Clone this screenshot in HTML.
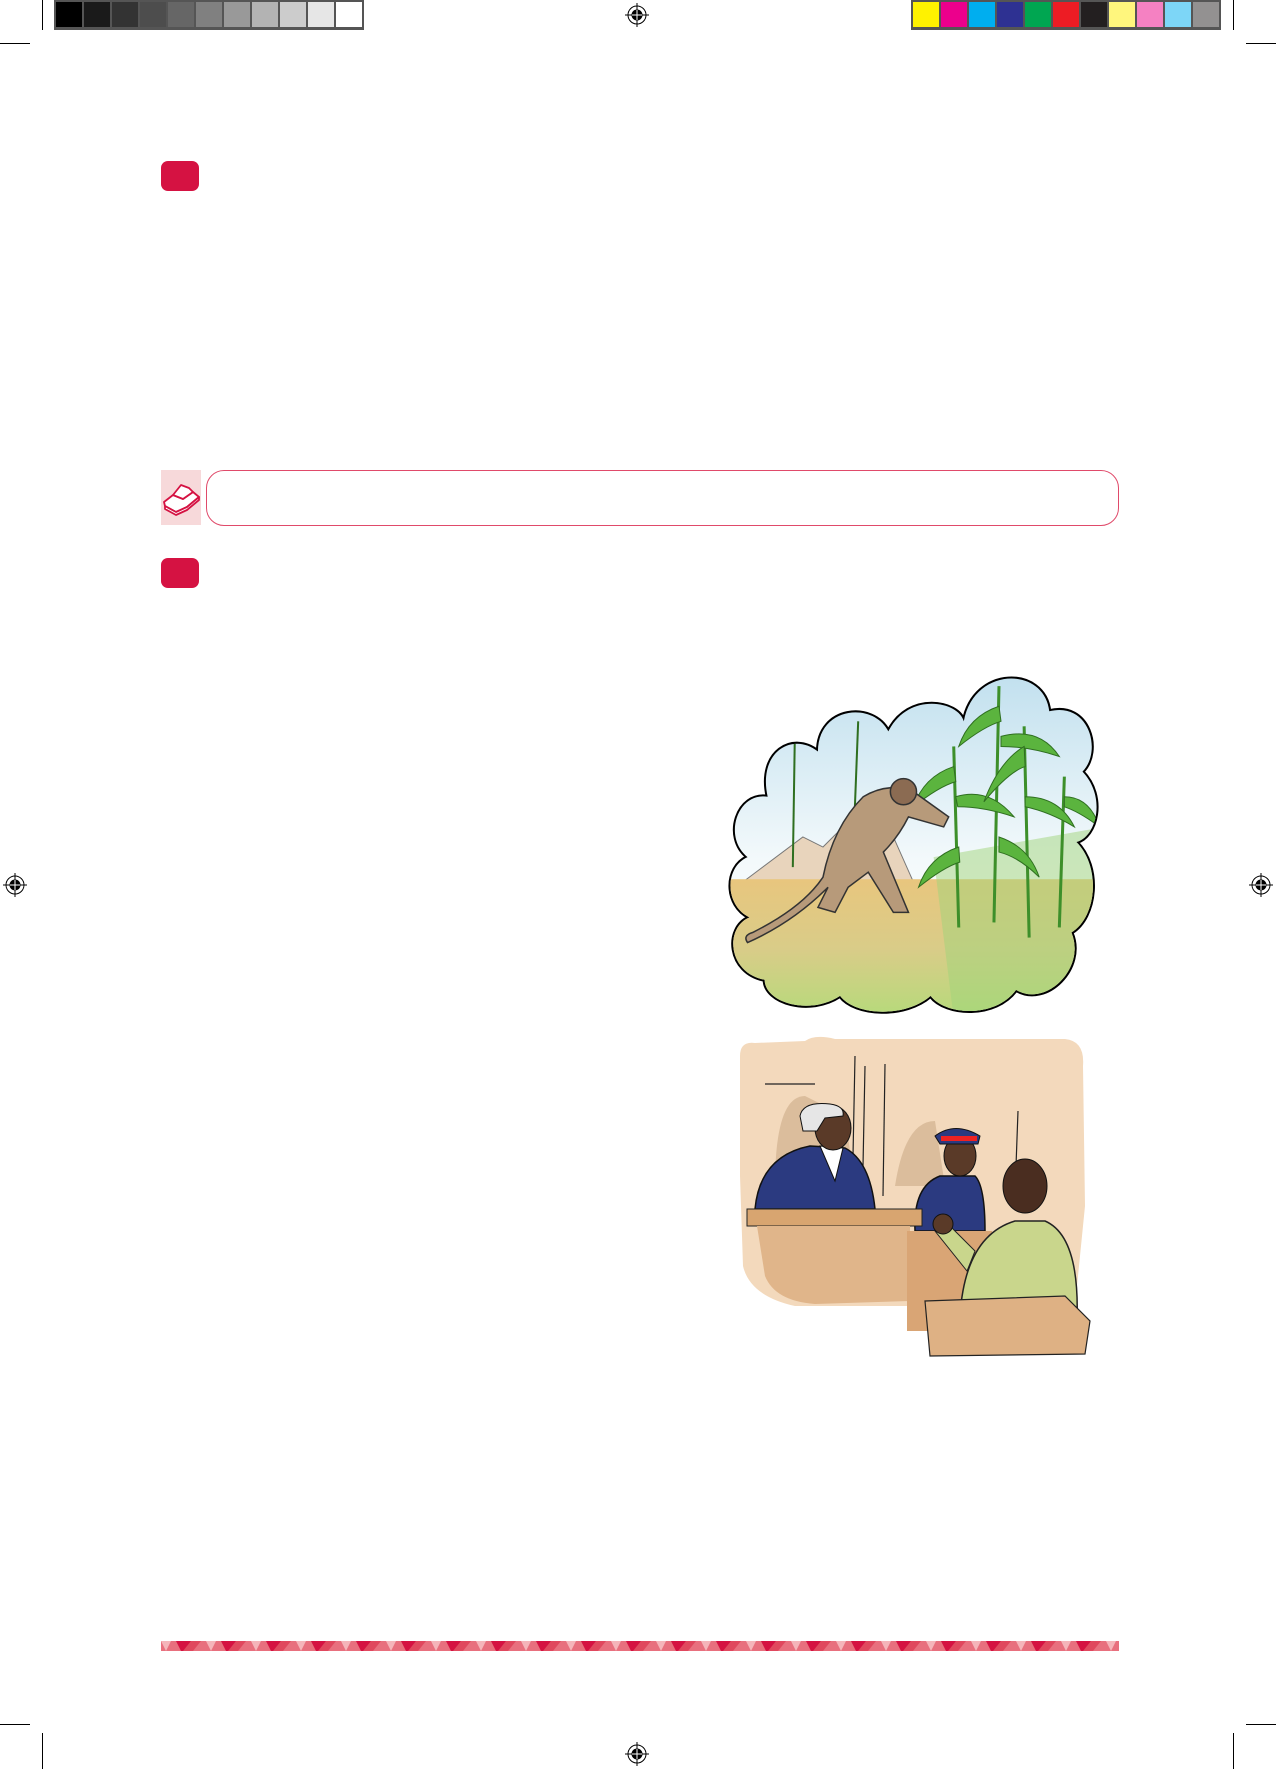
<!DOCTYPE html>
<html><head><meta charset="utf-8"><style>
html,body{margin:0;padding:0;background:#fff}
body{width:1276px;height:1769px;position:relative;overflow:hidden;font-family:"Liberation Sans",sans-serif}
.a{position:absolute}
.bar{position:absolute;top:0;height:30px;background:#555;display:flex;gap:2px;padding:2px 2px 3px 2px;box-sizing:border-box}
.bar div{flex:1}
.sq{position:absolute;width:38px;height:30px;background:#d51242;border-radius:7px}
</style></head><body>

<div class="bar" style="left:54px;width:310px">
<div style="background:#000"></div><div style="background:#1a1a1a"></div><div style="background:#333"></div><div style="background:#4d4d4d"></div><div style="background:#666"></div><div style="background:#808080"></div><div style="background:#999"></div><div style="background:#b3b3b3"></div><div style="background:#ccc"></div><div style="background:#e6e6e6"></div><div style="background:#fff"></div>
</div>
<div class="bar" style="left:911px;width:310px">
<div style="background:#fff200"></div><div style="background:#ec008c"></div><div style="background:#00aeef"></div><div style="background:#2e3192"></div><div style="background:#00a651"></div><div style="background:#ed1c24"></div><div style="background:#231f20"></div><div style="background:#fff67d"></div><div style="background:#f581c2"></div><div style="background:#7dd6f7"></div><div style="background:#939191"></div>
</div>

<div class="a" style="left:42px;top:0;width:1px;height:30px;background:#000"></div>
<div class="a" style="left:0;top:43px;width:30px;height:1px;background:#000"></div>
<div class="a" style="left:1233px;top:0;width:1px;height:30px;background:#000"></div>
<div class="a" style="left:1246px;top:43px;width:30px;height:1px;background:#000"></div>
<div class="a" style="left:42px;top:1733px;width:1px;height:36px;background:#000"></div>
<div class="a" style="left:0;top:1724px;width:30px;height:1px;background:#000"></div>
<div class="a" style="left:1233px;top:1733px;width:1px;height:36px;background:#000"></div>
<div class="a" style="left:1246px;top:1724px;width:30px;height:1px;background:#000"></div>

<svg class="a" style="left:0;top:0" width="1276" height="1769">
<defs><g id="reg"><circle r="9" fill="none" stroke="#000" stroke-width="1"/><circle r="5.5" fill="#000"/><line x1="-12" y1="0" x2="12" y2="0" stroke="#000"/><line x1="0" y1="-12" x2="0" y2="12" stroke="#000"/><line x1="-5" y1="0" x2="5" y2="0" stroke="#fff" stroke-width="1"/><line x1="0" y1="-5" x2="0" y2="5" stroke="#fff" stroke-width="1"/></g></defs>
<use href="#reg" x="637" y="15"/>
<use href="#reg" x="637" y="1754"/>
<use href="#reg" x="15" y="885"/>
<use href="#reg" x="1261" y="885"/>
</svg>

<div class="sq" style="left:161px;top:161px"></div>
<div class="sq" style="left:161px;top:558px"></div>

<div class="a" style="left:161px;top:470px;width:40px;height:55px;background:#f7d9da"></div>
<svg class="a" style="left:161px;top:470px" width="40" height="55" viewBox="0 0 40 55">
<g fill="#fff" stroke="#d51242" stroke-width="1.8" stroke-linejoin="round">
<path d="M3 32 L12 25 L22 29 L32 22 L38 27 L26 37 L15 42 L4 36 Z"/>
<path d="M12 25 L20 15 L28 18 L32 22 L22 29 Z"/>
<path d="M4 36 L15 42 L26 37 L38 27 L38 30 L26 40 L15 45 L4 39 Z"/>
</g></svg>
<div class="a" style="left:206px;top:470px;width:913px;height:56px;box-sizing:border-box;border:1.5px solid #e04a6a;border-radius:18px"></div>

<svg class="a" style="left:721px;top:666px" width="385" height="352" viewBox="0 0 380 350">
<defs>
<linearGradient id="sky" x1="0" y1="0" x2="0" y2="1"><stop offset="0" stop-color="#bfdfee"/><stop offset="0.55" stop-color="#f3f9fb"/><stop offset="1" stop-color="#fff"/></linearGradient>
<linearGradient id="gr" x1="0" y1="0" x2="0" y2="1"><stop offset="0" stop-color="#e8c67e"/><stop offset="0.5" stop-color="#d9cc88"/><stop offset="1" stop-color="#b4db7a"/></linearGradient>
<clipPath id="cl"><path id="cp" d="M25 190 C0 170 15 125 45 130 C35 85 70 65 95 85 C95 40 150 35 165 65 C185 25 235 35 240 55 C250 0 320 0 325 45 C365 35 378 85 358 105 C382 130 372 170 352 175 C377 200 372 250 347 265 C362 300 322 340 292 322 C272 350 222 348 207 328 C182 350 132 348 117 328 C87 348 42 335 42 312 C5 305 2 260 27 250 C2 238 2 200 25 190 Z"/></clipPath>
</defs>
<use href="#cp" fill="#fff" stroke="#000" stroke-width="4"/>
<g clip-path="url(#cl)">
<rect x="0" y="0" width="380" height="350" fill="url(#sky)"/>
<path d="M20 215 L80 170 L100 180 L125 155 L170 170 L190 215 Z" fill="#e8d4bc" stroke="#777" stroke-width="1"/>
<rect x="0" y="212" width="380" height="140" fill="url(#gr)"/>
<path d="M210 190 L380 160 L380 350 L230 350 Z" fill="#9fd47a" opacity="0.5"/>
<g stroke="#3d8f2a" stroke-width="3" fill="none">
<path d="M235 260 L230 80"/><path d="M270 255 L275 20"/><path d="M305 270 L300 60"/><path d="M335 260 L340 110"/>
</g>
<g fill="#5bb43e" stroke="#2f6f20" stroke-width="1">
<path d="M230 100 Q200 110 190 140 Q215 120 232 115Z"/><path d="M232 130 Q265 120 290 150 Q260 140 234 140Z"/>
<path d="M275 40 Q245 50 235 80 Q260 60 277 55Z"/><path d="M277 70 Q315 60 335 90 Q305 80 277 80Z"/>
<path d="M300 80 Q275 95 260 135 Q285 105 301 100Z"/><path d="M301 130 Q335 130 350 160 Q325 145 301 140Z"/>
<path d="M235 180 Q205 190 195 220 Q220 200 236 195Z"/><path d="M275 170 Q305 180 315 210 Q295 190 275 185Z"/>
<path d="M340 130 Q365 130 375 160 Q355 145 340 140Z"/>
</g>
<g stroke="#2f6f20" stroke-width="2"><path d="M70 200 L72 70"/><path d="M130 185 L135 55"/></g>
<path d="M30 265 Q80 240 100 210 Q110 160 140 130 Q165 115 190 125 L225 150 L220 160 L185 150 Q175 170 160 185 L185 245 L170 245 L145 205 L125 220 L112 245 L95 240 L105 220 Q70 255 25 275 Q20 268 30 265 Z" fill="#b79a7a" stroke="#333" stroke-width="1.5"/>
<circle cx="180" cy="125" r="13" fill="#8b6b52" stroke="#333" stroke-width="1.5"/>
</g>
</svg>

<svg class="a" style="left:735px;top:1036px" width="356" height="322" viewBox="0 0 356 322">
<path d="M5 20 Q5 5 20 7 L70 5 Q80 -2 100 3 L330 3 Q350 5 348 30 L350 170 L340 270 L60 270 Q15 260 8 230 L5 140 Z" fill="#f3d9bc"/>
<path d="M40 150 Q40 60 70 60 L110 80 L120 150 Z" fill="#dbbd9c"/>
<path d="M160 150 Q170 85 200 85 L210 150 Z" fill="#dbbd9c"/>
<g stroke="#222" stroke-width="1.2"><line x1="120" y1="20" x2="118" y2="120"/><line x1="130" y1="30" x2="128" y2="130"/><line x1="150" y1="28" x2="148" y2="160"/><line x1="283" y1="75" x2="281" y2="130"/><line x1="30" y1="48" x2="80" y2="48"/></g>
<path d="M20 173 Q25 120 75 110 L110 112 Q135 125 140 173 Z" fill="#2b3a80" stroke="#111" stroke-width="1.5"/>
<path d="M85 110 L100 145 L108 112 Z" fill="#fff" stroke="#111"/>
<ellipse cx="98" cy="92" rx="18" ry="22" fill="#5a3a28" stroke="#111"/>
<path d="M65 80 Q68 65 95 68 Q110 70 108 80 L90 82 L82 95 L68 95 Z" fill="#e6e6e6" stroke="#111"/>
<path d="M180 195 Q178 150 205 140 L240 140 Q250 150 250 195 Z" fill="#2b3a80" stroke="#111" stroke-width="1.5"/>
<ellipse cx="225" cy="120" rx="16" ry="20" fill="#5a3a28" stroke="#111"/>
<path d="M200 100 Q220 85 245 100 L243 108 L205 108 Z" fill="#2b3a80" stroke="#111"/>
<rect x="206" y="100" width="36" height="5" fill="#e22"/>
<rect x="12" y="173" width="175" height="17" fill="#d8a570" stroke="#222"/>
<path d="M22 190 L175 190 L175 265 L80 268 Q40 265 30 240 Z" fill="#e0b58a"/>
<rect x="172" y="195" width="85" height="100" fill="#d9a575"/>
<path d="M225 280 Q230 200 280 185 L310 185 Q345 200 342 285 Z" fill="#c9d68c" stroke="#222" stroke-width="1.5"/>
<path d="M240 215 L210 185 L200 195 L232 235 Z" fill="#c9d68c" stroke="#222"/>
<circle cx="208" cy="188" r="10" fill="#5a3a28" stroke="#111"/>
<ellipse cx="290" cy="150" rx="22" ry="27" fill="#4a2d20" stroke="#111"/>
<path d="M190 265 L330 260 L355 285 L350 318 L195 320 Z" fill="#deb184" stroke="#222" stroke-width="1.2"/>
</svg>

<svg class="a" style="left:161px;top:1641px" width="958" height="10" viewBox="0 0 958 10" preserveAspectRatio="none">
<defs><pattern id="zz" width="45" height="10" patternUnits="userSpaceOnUse">
<rect width="45" height="10" fill="#e8707e"/>
<polygon points="0,0 10,0 5,10" fill="#f5b5ba"/>
<polygon points="15,0 30,0 25,10 20,10" fill="#d51242"/>
<polygon points="30,0 40,0 32,10 22,10" fill="#e0485e"/>
</pattern></defs>
<rect width="958" height="10" fill="url(#zz)"/>
</svg>
</body></html>
